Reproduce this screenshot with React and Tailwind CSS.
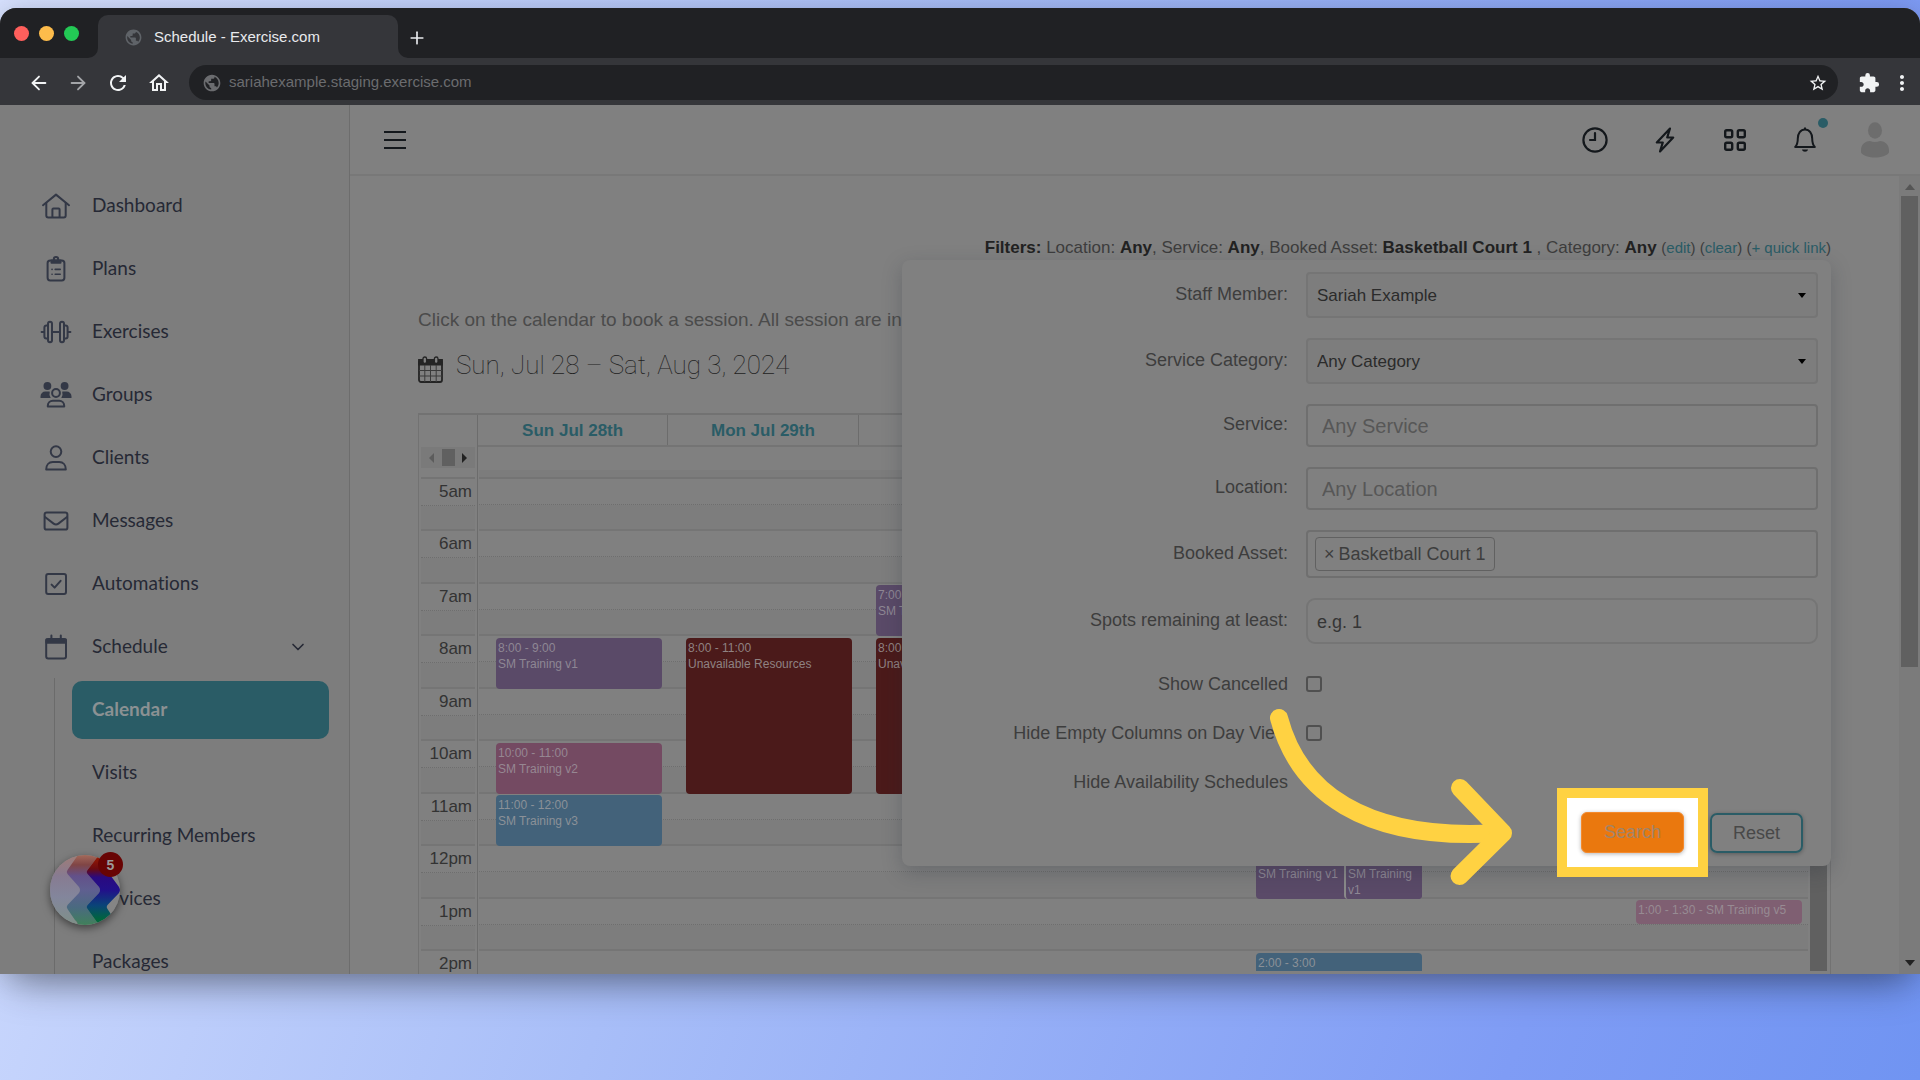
import React from 'react'
import { ArrowLeft, ArrowRight, ChevronDown, Plus } from 'lucide-react'
import { MdExtension, MdMoreVert, MdOutlineHome, MdPublic, MdRefresh, MdStarBorder } from 'react-icons/md'

// ─── Sidebar icons (32 x 28 box) ──────────────────────────────────────────────
const Icon = ({ children }) => (
  <svg viewBox="0 0 32 28" className="w-8 h-7 shrink-0" fill="none" stroke="currentColor"
    strokeWidth="2" strokeLinecap="round" strokeLinejoin="round" aria-hidden="true">
    {children}
  </svg>
)

const HomeIcon = () => (
  <Icon>
    <path d="M3 13.2 16 2.6l13 10.6" />
    <path d="M6.3 11v12.6a2 2 0 0 0 2 2h15.4a2 2 0 0 0 2-2V11" />
    <path d="M12.4 25v-7.4a1 1 0 0 1 1-1h5.2a1 1 0 0 1 1 1V25" />
  </Icon>
)

const PlansIcon = () => (
  <Icon>
    <rect x="7.6" y="5.4" width="16.8" height="20" rx="2.6" />
    <circle cx="16" cy="4.2" r="2.2" />
    <path d="M11.5 5.4h9v2.4h-9z" fill="currentColor" />
    <path d="M12 14.4h.1M12 19.2h.1M15.2 14.4h5M15.2 19.2h5" strokeWidth="1.6" />
  </Icon>
)

const ExercisesIcon = () => (
  <Icon>
    <rect x="8" y="3.8" width="4" height="20.4" rx="2" />
    <rect x="20" y="3.8" width="4" height="20.4" rx="2" />
    <path d="M8 7.4H6.4a2 2 0 0 0-2 2v9.2a2 2 0 0 0 2 2H8M24 7.4h1.6a2 2 0 0 1 2 2v9.2a2 2 0 0 1-2 2H24" />
    <path d="M12 14h8M1.6 14h2.4M28 14h2.4" />
  </Icon>
)

const GroupsIcon = () => (
  <Icon>
    <circle cx="7.4" cy="5" r="3.9" fill="currentColor" stroke="none" />
    <circle cx="24.6" cy="5" r="3.9" fill="currentColor" stroke="none" />
    <path d="M.5 17v-1.6a4.8 4.8 0 0 1 4.8-4.8h3.2c.5 0 .9.1 1.3.2a7 7 0 0 0 .9 6.2z" fill="currentColor" stroke="none" />
    <path d="M31.5 17v-1.6a4.8 4.8 0 0 0-4.8-4.8h-3.2c-.5 0-.9.1-1.3.2a7 7 0 0 1-.9 6.2z" fill="currentColor" stroke="none" />
    <circle cx="16" cy="12" r="3.9" />
    <path d="M7.8 25.4v-.6c0-2.8 2.2-5 5-5h6.4c2.8 0 5 2.2 5 5v.6z" />
  </Icon>
)

const ClientsIcon = () => (
  <Icon>
    <circle cx="16" cy="7.6" r="5.3" />
    <path d="M6.2 25.4c0-4.4 2.6-7.4 6.6-7.4h6.4c4 0 6.6 3 6.6 7.4z" />
  </Icon>
)

const MessagesIcon = () => (
  <Icon>
    <rect x="4.6" y="5.4" width="22.8" height="17.2" rx="2.2" />
    <path d="m5 10 8.6 6.6a4 4 0 0 0 4.8 0L27 10" />
  </Icon>
)

const AutomationsIcon = () => (
  <Icon>
    <rect x="6.2" y="4" width="19.8" height="20" rx="2" />
    <path d="m11.6 14.6 3 3 6-6.8" />
  </Icon>
)

const ScheduleIcon = () => (
  <Icon>
    <rect x="6.2" y="6" width="19.8" height="19.4" rx="2" />
    <path d="M6.4 6.4h19.4v3.4H6.4z" fill="currentColor" />
    <path d="M11.4 2.4v3M20.8 2.4v3" />
  </Icon>
)

const menu = [
  { label: "Dashboard",   icon: HomeIcon },
  { label: "Plans",       icon: PlansIcon },
  { label: "Exercises",   icon: ExercisesIcon },
  { label: "Groups",      icon: GroupsIcon },
  { label: "Clients",     icon: ClientsIcon },
  { label: "Messages",    icon: MessagesIcon },
  { label: "Automations", icon: AutomationsIcon },
  { label: "Schedule",    icon: ScheduleIcon, open: true },
]

const subMenu = ["Calendar", "Visits", "Recurring Members", "Services", "Packages"]

const hours = ["5am", "6am", "7am", "8am", "9am", "10am", "11am", "12pm", "1pm", "2pm"]

const tones = {
  purple: "bg-[#5a4a68] text-[#8e8794]",
  red:    "bg-[#4b1a1a] text-[#8f8282]",
  pink:   "bg-[#744a62] text-[#968792]",
  blue:   "bg-[#43627a] text-[#8b9198]",
  rose:   "bg-[#7f5f72] text-[#978b93]",
}

const days = [
  { name: "Sun Jul 28th", events: [
    { start: 8,  length: 1, time: "8:00 - 9:00",   title: "SM Training v1", tone: "purple" },
    { start: 10, length: 1, time: "10:00 - 11:00", title: "SM Training v2", tone: "pink" },
    { start: 11, length: 1, time: "11:00 - 12:00", title: "SM Training v3", tone: "blue" },
  ] },
  { name: "Mon Jul 29th", events: [
    { start: 8, length: 3, time: "8:00 - 11:00", title: "Unavailable Resources", tone: "red" },
  ] },
  { name: "Tue Jul 30th", events: [
    { start: 7, length: 1, time: "7:00 - 8:00",  title: "SM Training v1", tone: "purple" },
    { start: 8, length: 3, time: "8:00 - 11:00", title: "Unavailable Resources", tone: "red" },
  ] },
  { name: "Wed Jul 31st", events: [] },
  { name: "Thu Aug 1st", events: [
    { start: 12, length: 1, time: "12:00 - 1:00", title: "SM Training v1", tone: "purple" },
    { start: 12, length: 1, time: "12:00 - 1:00", title: "SM Training v1", tone: "purple", half: true },
    { start: 14, length: 1, time: "2:00 - 3:00",  tone: "blue" },
  ] },
  { name: "Fri Aug 2nd", events: [] },
  { name: "Sat Aug 3rd", events: [
    { start: 13, length: 0.5, time: "1:00 - 1:30 - SM Training v5", tone: "rose" },
  ] },
]

const HOUR = 52.5

// ─── Browser chrome ───────────────────────────────────────────────────────────
function BrowserBar() {
  return (
    <div className="shrink-0">
      <div className="h-[50px] bg-[#202124] flex items-end">
        <div className="flex gap-[10px] self-center pl-[14px] w-[98px]">
          <span className="w-[15px] h-[15px] rounded-full bg-[#ff5f5c]" />
          <span className="w-[15px] h-[15px] rounded-full bg-[#fdbc4b]" />
          <span className="w-[15px] h-[15px] rounded-full bg-[#23c955]" />
        </div>
        <div className="relative w-[300px] h-[43px] rounded-t-[10px] bg-[#35363a] flex items-center gap-[11px] pl-[26px] pt-[2px]">
          <svg viewBox="0 0 10 10" className="absolute -left-[10px] bottom-0 w-[10px] h-[10px] fill-[#35363a]" aria-hidden="true">
            <path d="M10 0v10H0A10 10 0 0 0 10 0z" />
          </svg>
          <svg viewBox="0 0 10 10" className="absolute -right-[10px] bottom-0 w-[10px] h-[10px] fill-[#35363a]" aria-hidden="true">
            <path d="M0 0v10h10A10 10 0 0 1 0 0z" />
          </svg>
          <MdPublic className="w-[19px] h-[19px] text-[#5f6368]" />
          <span className="text-[15px] text-[#e8eaed] whitespace-nowrap">Schedule - Exercise.com</span>
        </div>
        <button aria-label="New tab" className="ml-[9px] mb-[10px] text-[#e8eaed]">
          <Plus className="w-5 h-5" />
        </button>
      </div>
      <div className="h-[47px] bg-[#35363a] flex items-center pt-[2px] pl-[28px] pr-[6px] text-[#f1f3f4]">
        <button aria-label="Back" className="mr-[17px]"><ArrowLeft className="w-[22px] h-[22px]" /></button>
        <button aria-label="Forward" className="mr-[17px] text-[#a3a5a8]"><ArrowRight className="w-[22px] h-[22px]" /></button>
        <button aria-label="Reload" className="mr-[17px]"><MdRefresh className="w-6 h-6" /></button>
        <button aria-label="Home" className="mr-[18px]"><MdOutlineHome className="w-6 h-6" /></button>
        <div className="flex-1 h-[35px] rounded-full bg-[#202124] flex items-center pl-[13px] pr-[10px]">
          <MdPublic className="w-[20px] h-[20px] text-[#6b6c6f] shrink-0" />
          <input aria-label="Address" defaultValue="sariahexample.staging.exercise.com"
            className="flex-1 min-w-0 ml-[7px] bg-transparent text-[15px] text-[#6b6c6f] outline-none" />
          <MdStarBorder className="w-5 h-5" />
        </div>
        <MdExtension className="w-[22px] h-[22px] ml-5" />
        <MdMoreVert className="w-6 h-6 ml-[10px]" />
      </div>
    </div>
  )
}

// ─── Sidebar ──────────────────────────────────────────────────────────────────
function Sidebar() {
  return (
    <aside className="relative w-[350px] shrink-0 border-r border-[#6d6d6d] bg-[#7d7d7d] pt-[69px] overflow-hidden
      font-['Lato',sans-serif] [font-variant-ligatures:none] text-[19px] text-[#262935]">
      <nav>
        {menu.map(({ label, icon: ItemIcon, open }) => (
          <a key={label} href="#" className="flex items-center h-[63px] pl-[40px] pr-[41px]">
            <span className="text-[#333846]"><ItemIcon /></span>
            <span className="ml-5">{label}</span>
            {open && <ChevronDown className="w-5 h-5 ml-auto" />}
          </a>
        ))}
        <div className="ml-[54px] border-l border-[#6b6b6b]">
          {subMenu.map((label, i) => (
            <a key={label} href="#" className="flex items-center h-[63px] pl-[17px] pr-5">
              <span className={`flex items-center flex-1 h-[58px] pl-5 rounded-[10px]
                ${i === 0 ? "bg-[#2a5c66] text-[#8b9193] font-bold" : ""}`}>
                {label}
              </span>
            </a>
          ))}
        </div>
      </nav>
      <ChatBubble />
    </aside>
  )
}

function ChatBubble() {
  return (
    <button aria-label="Messages, 5 unread" className="absolute left-[50px] top-[750px] w-[70px] h-[70px] rounded-full shadow-[0_3px_8px_rgba(0,0,0,0.5)]">
      <svg viewBox="0 0 70 70" className="w-[70px] h-[70px]" aria-hidden="true">
        <defs>
          <clipPath id="disc"><circle cx="35" cy="35" r="35" /></clipPath>
          <linearGradient id="pale" x2="0" y2="1">
            <stop offset="0" stopColor="#a07c76" /><stop offset=".3" stopColor="#877b91" />
            <stop offset=".6" stopColor="#83869c" /><stop offset="1" stopColor="#7f9088" />
          </linearGradient>
          <linearGradient id="mid" x2="0" y2="1">
            <stop offset="0" stopColor="#a3695a" /><stop offset=".14" stopColor="#804545" />
            <stop offset=".3" stopColor="#63518a" /><stop offset=".5" stopColor="#5f5f90" />
            <stop offset=".75" stopColor="#4a6a80" /><stop offset="1" stopColor="#40805a" />
          </linearGradient>
          <linearGradient id="deep" x2="0" y2="1">
            <stop offset="0" stopColor="#a01c00" /><stop offset=".2" stopColor="#6a0a10" />
            <stop offset=".32" stopColor="#2a0a80" /><stop offset=".5" stopColor="#22108a" />
            <stop offset=".72" stopColor="#0a4478" /><stop offset=".92" stopColor="#00663c" />
          </linearGradient>
        </defs>
        <g clipPath="url(#disc)">
          <path d="M0 0h70v70H0z" fill="#858585" />
          <path d="M0 0h28L17 17l12 15q2 3 0 6L17 52l11 18H0z" fill="url(#pale)" />
          <path d="M28 0h21L37.5 15q-1.5 2 0 4L49 32q2 3 0 6L37.5 50q-1.5 2 0 4L49 70H28q0-3-3-5l-7.5-11q-1.5-2 0-4L29 38q2-3 0-6L17.5 19q-1.5-2 0-4z" fill="url(#mid)" />
          <path d="M49 0h21L58 17l11 15q2 3 0 6L57.5 50q-1.5 2 0 4L68 70H49L37.5 54q-1.5-2 0-4L49 38q2-3 0-6L37.5 19q-1.5-2 0-4z" fill="url(#deep)" />
        </g>
      </svg>
      <span className="absolute -top-[3px] -right-[3px] w-[25px] h-[25px] rounded-full bg-[#680404] flex items-center justify-center
        font-['Liberation_Sans',Arial,sans-serif] text-sm font-bold text-[#9a9a9a]">5</span>
    </button>
  )
}

// ─── Header ───────────────────────────────────────────────────────────────────
function Header() {
  return (
    <header className="h-[71px] shrink-0 flex items-center justify-between border-b-2 border-[#787878] pl-[34px] pr-[31px] text-[#14181c]">
      <button aria-label="Toggle menu" className="flex flex-col gap-[6px] w-[22px]">
        <span className="h-[2px] bg-current" />
        <span className="h-[2px] bg-current" />
        <span className="h-[2px] bg-current" />
      </button>
      <div className="flex items-center gap-[42px]">
        <button aria-label="Clock">
          <svg viewBox="0 0 28 28" className="w-7 h-7" fill="none" stroke="currentColor" strokeWidth="2.2" strokeLinecap="round">
            <circle cx="14" cy="14" r="11.6" /><path d="M14 7v7H9" />
          </svg>
        </button>
        <button aria-label="Quick actions">
          <svg viewBox="0 0 28 28" className="w-7 h-7" fill="none" stroke="currentColor" strokeWidth="2.2" strokeLinejoin="round">
            <path d="M19 2.5 5.8 16.5h6L9 25.5l13.2-14h-6z" />
          </svg>
        </button>
        <button aria-label="Apps">
          <svg viewBox="0 0 28 28" className="w-7 h-7" fill="none" stroke="currentColor" strokeWidth="2.4">
            <rect x="4.2" y="4.2" width="7" height="7" rx="1.5" />
            <rect x="16.8" y="4.2" width="7" height="7" rx="1.5" />
            <rect x="4.2" y="16.8" width="7" height="7" rx="1.5" />
            <rect x="16.8" y="16.8" width="7" height="7" rx="1.5" />
          </svg>
        </button>
        <button aria-label="Notifications" className="relative">
          <svg viewBox="0 0 28 28" className="w-7 h-7" fill="none" stroke="currentColor" strokeWidth="2" strokeLinejoin="round">
            <path d="M14 1.4v2" />
            <path d="M4.2 21c2.2-2.4 2.6-5 2.6-8.5 0-5 2.7-9 7.2-9s7.2 4 7.2 9c0 3.5.4 6.1 2.6 8.5z" />
            <path d="M11 23.4h6c-.5 3-5.5 3-6 0z" fill="currentColor" stroke="none" />
          </svg>
          <span className="absolute -top-2 -right-[9px] w-[10px] h-[10px] rounded-full bg-[#2a5c66]" />
        </button>
        <button aria-label="Account">
          <svg viewBox="0 0 28 36" className="w-7 h-9 fill-[#6d6d6d]">
            <ellipse cx="14" cy="8.5" rx="7" ry="8.3" />
            <path d="M0 28c0-6 5-9 9-9 3 1.3 7 1.3 10 0 4 0 9 3 9 9v2.5c-2 3.5-8 5-14 5s-12-1.5-14-5z" />
          </svg>
        </button>
      </div>
    </header>
  )
}

// ─── Week calendar ────────────────────────────────────────────────────────────
function Event({ event }) {
  return (
    <div
      className={`absolute rounded-[4px] overflow-hidden pl-[2px] pt-[2px] text-[12px] leading-4
        ${event.half ? "left-[106px] right-[6px] border-l-2 border-[#8a8a8a]" : "left-[18px] right-[6px]"} ${tones[event.tone]}`}
      style={{ top: Math.round((event.start - 5) * HOUR) + 1, height: Math.round(event.length * HOUR) - 2 }}
    >
      <div className="whitespace-nowrap">{event.time}</div>
      {event.title && <div>{event.title}</div>}
    </div>
  )
}

const HourLines = ({ labels }) => hours.map((h) => (
  <div key={h} className="odd:h-[52px] even:h-[53px] flex flex-col border-b-2 border-[#757575] text-right text-[17px] leading-[26px] text-[#333]">
    <div className="flex-1 border-b border-dotted border-[#6e6e6e] pr-[3px]">{labels && h}</div>
    <div className="flex-1 bg-[#7d7d7d]" />
  </div>
))

function Calendar() {
  return (
    <section className="mt-8 flex-1 min-h-0 flex flex-col border-x border-t-2 border-[#727272]">
      <div className="flex shrink-0 h-8">
        <div className="w-[59px] border-r border-[#6c6c6c]" />
        <div className="flex-1 flex mr-[20px] border-b-2 border-[#747474]">
          {days.map((d) => (
            <div key={d.name} className="flex-1 border-r border-[#6c6c6c] pt-px text-center text-[17px] leading-[30px] font-bold text-[#2a5c66]">{d.name}</div>
          ))}
        </div>
      </div>
      <div className="flex shrink-0 h-8">
        <div className="w-[59px] border-r border-[#6c6c6c] pl-[2px] pr-[2px] flex flex-col">
          <div className="h-[21px] bg-[#7a7a7a] flex items-center justify-between px-2">
            <svg viewBox="0 0 5 10" className="w-[5px] h-[10px] fill-[#5c5c5c]"><path d="M5 0v10L0 5z" /></svg>
            <span className="w-[13px] h-[17px] bg-[#606060]" />
            <svg viewBox="0 0 5 10" className="w-[5px] h-[10px] fill-[#222]"><path d="M0 0v10l5-5z" /></svg>
          </div>
          <div className="flex-1 border-b-2 border-[#747474]" />
        </div>
        <div className="flex-1 flex flex-col justify-end pl-px">
          <div className="h-[9px] bg-[#7c7c7c] border-b-2 border-[#747474]" />
        </div>
      </div>
      <div className="flex flex-1 min-h-0">
        <div className="w-[59px] border-r border-[#6c6c6c] px-[2px] overflow-hidden"><HourLines labels /></div>
        <div className="relative flex-1 mb-[3px] overflow-hidden pl-px">
          <HourLines />
          <div className="absolute inset-0 flex">
            {days.map((d) => (
              <div key={d.name} className="relative flex-1">
                {d.events.map((e, i) => <Event key={i} event={e} />)}
              </div>
            ))}
          </div>
        </div>
        <div className="w-[22px] mb-[3px] pl-[2px] pr-[3px]"><div className="h-full bg-[#606060]" /></div>
      </div>
    </section>
  )
}

// ─── Filter panel ─────────────────────────────────────────────────────────────
function Row({ id, label, children }) {
  return (
    <div className="grid grid-cols-[386px_1fr] gap-[18px] items-center">
      <label htmlFor={id} className="text-right pb-[2px]">{label}</label>
      {children}
    </div>
  )
}

function Select({ id, value }) {
  return (
    <div className="relative">
      <select id={id} className="appearance-none w-full h-[46px] rounded-[4px] border-2 border-[#757575] bg-[#7d7d7d] pt-[2px] pl-[9px] text-[17px] text-[#2b2b2b]">
        <option>{value}</option>
      </select>
      <svg viewBox="0 0 8 5" className="absolute right-3 top-[21px] w-2 h-[5px] fill-black pointer-events-none"><path d="M0 0h8L4 5z" /></svg>
    </div>
  )
}

function Filters() {
  return (
    <form className="absolute right-0 top-full z-10 w-[929px] rounded-lg bg-[#808080] pt-3 pb-[13px] text-[18px] text-[#3d3d3d]
      shadow-[0_6px_20px_rgba(30,40,50,0.25)]">
      <div className="flex flex-col gap-5 pr-[13px]">
        <Row id="staff" label="Staff Member:"><Select id="staff" value="Sariah Example" /></Row>
        <Row id="category" label="Service Category:"><Select id="category" value="Any Category" /></Row>
        <Row id="service" label="Service:">
          <input id="service" placeholder="Any Service"
            className="h-[43px] rounded-[4px] border-2 border-[#6f6f6f] pt-[2px] pl-[14px] text-[20px] placeholder:text-[#575757]" />
        </Row>
        <Row id="location" label="Location:">
          <input id="location" placeholder="Any Location"
            className="h-[43px] rounded-[4px] border-2 border-[#6f6f6f] pt-[2px] pl-[14px] text-[20px] placeholder:text-[#575757]" />
        </Row>
        <Row id="asset" label="Booked Asset:">
          <div className="flex items-center h-12 rounded-[4px] border-2 border-[#6f6f6f] pl-[7px]">
            <span className="flex items-center gap-1 h-[34px] rounded-[4px] border border-[#616161] px-2 whitespace-nowrap">
              <button type="button" aria-label="Remove Basketball Court 1">×</button>Basketball Court 1
            </span>
            <input id="asset" className="flex-1 min-w-0 outline-none" />
          </div>
        </Row>
        <Row id="spots" label="Spots remaining at least:">
          <input id="spots" placeholder="e.g. 1"
            className="h-[46px] rounded-[9px] border-2 border-[#757575] pt-[2px] pl-[9px] text-[18px] placeholder:text-[#353535]" />
        </Row>
      </div>
      <div className="mt-4">
        {["Show Cancelled", "Hide Empty Columns on Day View"].map((label) => (
          <div key={label} className="h-[49px] grid grid-cols-[386px_1fr] gap-[18px] items-center">
            <label htmlFor={label} className="text-right">{label}</label>
            <input id={label} type="checkbox" className="appearance-none w-4 h-4 mb-[2px] rounded-[3px] border-2 border-[#505050]" />
          </div>
        ))}
        <div className="h-[49px] grid grid-cols-[386px_1fr] items-center text-right">Hide Availability Schedules</div>
      </div>
      <div className="mt-[5px] mr-7 flex justify-end items-center gap-[26px]">
        <div className="relative">
          <div className="absolute -inset-6 border-[10px] border-[#ffd242] bg-white" />
          <button type="button" className="relative block w-[103px] h-[41px] rounded-md border border-[#f58a2c] bg-[#ea780e] text-[#a0846a]
            shadow-[0_1px_4px_rgba(0,0,0,0.3)]">Search</button>
        </div>
        <button type="button" className="w-[93px] h-10 pt-[2px] rounded-[7px] border-2 border-[#2a5c66] text-[#484848] shadow-[0_1px_4px_rgba(0,0,0,0.3)]">Reset</button>
      </div>
      <svg viewBox="1269 708 244 179" className="absolute right-[318px] bottom-[-21px] w-[244px] h-[179px]" fill="none"
        stroke="#ffd242" strokeWidth="18" strokeLinecap="round" strokeLinejoin="round" aria-hidden="true">
        <path d="M1279 718C1298 790 1362 842 1500 833" />
        <path d="M1460 788 1503 833l-43.5 43" />
      </svg>
    </form>
  )
}

const Link = ({ children }) => <>(<a href="#" className="text-[#2a5c66]">{children}</a>)</>

function Main() {
  return (
    <div className="flex-1 min-h-0 flex">
      <main className="flex-1 min-w-0 flex flex-col pt-[59px] px-[68px] overflow-hidden">
        <div className="relative">
          <p className="text-right text-[17px] leading-[25px] text-[#3d3d3d] whitespace-nowrap [&>b]:text-[#222]">
            <b>Filters:</b> Location: <b>Any</b>, Service: <b>Any</b>, Booked Asset: <b>Basketball Court 1</b> , Category: <b>Any</b>{" "}
            <span className="text-[15px]"><Link>edit</Link> <Link>clear</Link> <Link>+ quick link</Link></span>
          </p>
          <Filters />
        </div>
        <p className="mt-12 text-[19px] leading-6 text-[#4b4b4b]">
          Click on the calendar to book a session. All session are in Eastern Time
        </p>
        <div className="mt-[17px] h-8 flex items-center gap-[13px]">
          <svg viewBox="0 0 25 27" className="w-[25px] h-[27px] mt-2" fill="none" stroke="#242424" strokeWidth="1.8">
            <rect x="1" y="4" width="23" height="22" rx="2" />
            <path d="M1 4h23v4.5H1z" fill="#242424" />
            <path d="M6.8 9v17M12.5 9v17M18.2 9v17M1 14.5h23M1 20h23" strokeWidth="1" stroke="#3a3a3a" />
            <rect x="5" y="1" width="3.6" height="6.5" rx="1.8" fill="#808080" strokeWidth="1.3" />
            <rect x="16.4" y="1" width="3.6" height="6.5" rx="1.8" fill="#808080" strokeWidth="1.3" />
          </svg>
          <h1 className="text-[26px] leading-8 font-['Roboto',sans-serif] font-thin text-[#222]">Sun, Jul 28 – Sat, Aug 3, 2024</h1>
        </div>
        <Calendar />
      </main>
      <div className="w-[21px] bg-[#7b7b7b] flex flex-col items-center">
        <svg viewBox="0 0 10 6" className="w-[10px] h-[6px] mt-2 mb-[6px] shrink-0 fill-[#555]"><path d="M0 6h10L5 0z" /></svg>
        <div className="w-[17px] h-[471px] shrink-0 bg-[#606060]" />
        <svg viewBox="0 0 10 6" className="w-[10px] h-[6px] mt-auto mb-2 shrink-0 fill-[#222]"><path d="M0 0h10L5 6z" /></svg>
      </div>
    </div>
  )
}

function App() {
  return (
    <div className="h-screen flex flex-col pt-2 pb-[106px] overflow-hidden bg-[linear-gradient(110deg,#d8e2ff,#a8bef8_42%,#7f9cf5_82%,#7094f2)]
      font-['Liberation_Sans',Arial,sans-serif]">
      <div className="flex-1 min-h-0 flex flex-col rounded-t-2xl overflow-hidden bg-[#808080]
        shadow-[0_20px_40px_-12px_rgba(0,0,0,0.4),0_0_30px_rgba(0,0,0,0.15)]">
        <BrowserBar />
        <div className="flex-1 min-h-0 flex">
          <Sidebar />
          <div className="flex-1 min-w-0 flex flex-col">
            <Header />
            <Main />
          </div>
        </div>
      </div>
    </div>
  )
}

export default App
